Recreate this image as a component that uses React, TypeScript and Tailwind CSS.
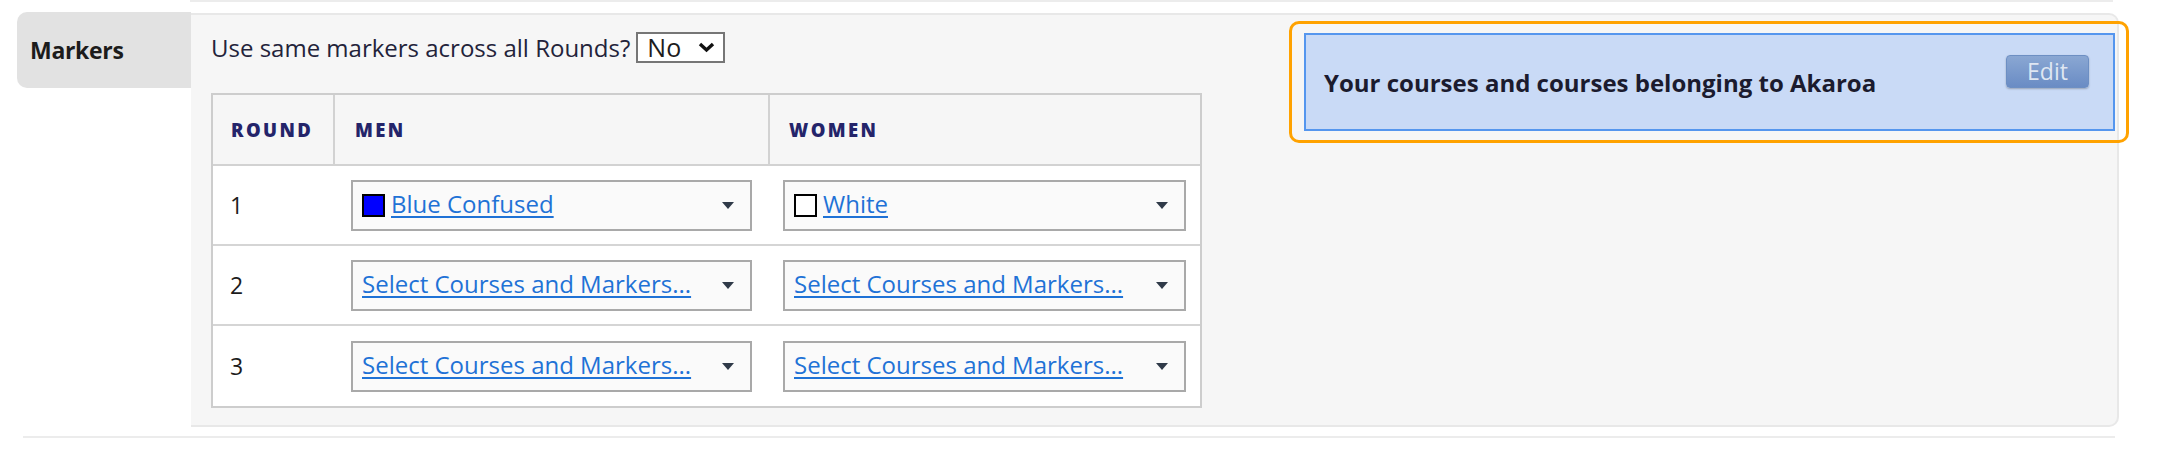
import React from 'react'

type Marker = { label: string; swatch?: string }

const rows: { round: number; men: Marker; women: Marker }[] = [
  { round: 1, men: { label: 'Blue Confused', swatch: 'bg-[#0000ff]' }, women: { label: 'White', swatch: 'bg-white' } },
  { round: 2, men: { label: 'Select Courses and Markers...' }, women: { label: 'Select Courses and Markers...' } },
  { round: 3, men: { label: 'Select Courses and Markers...' }, women: { label: 'Select Courses and Markers...' } },
]

const Caret = () => (
  <svg width="12" height="7" viewBox="0 0 12 7" className="shrink-0">
    <path d="M0 0 H12 L6 7 Z" fill="#2f3a48" />
  </svg>
)

const MarkerSelect: React.FC<{ marker: Marker; width: string }> = ({ marker, width }) => (
  <div className={`${width} h-[51px] border-2 border-[#a9a9a9] bg-[#fafafa] flex items-center justify-between pl-[9px] pr-[16px]`}>
    <div className="flex items-center gap-[6px]">
      {marker.swatch && (
        <span className={`w-[23px] h-[23px] border-2 border-black shrink-0 ${marker.swatch}`} />
      )}
      <a className="text-[24px] text-[#1f72d6] underline underline-offset-[3px] leading-none pb-[3px] whitespace-nowrap">
        {marker.label}
      </a>
    </div>
    <Caret />
  </div>
)

const App: React.FC = () => {
  return (
    <div className="w-[2159px] h-[452px] bg-white text-[#1c1c1c] font-['Open_Sans',sans-serif] overflow-hidden">
      {/* ── line of the section above ── */}
      <div className="ml-[190px] w-[1923px] h-[2px] bg-[#ececec]" />

      <div className="flex ml-[17px] mt-[10px]">
        {/* ── Tab ── */}
        <div className="w-[174px] h-[76px] bg-[#e2e2e2] rounded-l-[10px] flex items-center pl-[13px]">
          <span className="text-[23px] font-bold tracking-[-0.3px]">Markers</span>
        </div>

        {/* ── Panel ── */}
        <div className="mt-[1px] w-[1928px] h-[414px] bg-[#f6f6f6] border-2 border-[#e8e8e8] border-l-0 rounded-r-[10px] flex justify-between">
          <div className="pl-[20px] pt-[17px]">
            <div className="flex items-center h-[31px] gap-[6px]">
              <span className="text-[24px] text-[#23233a] leading-none">Use same markers across all Rounds?</span>
              <div className="w-[89px] h-[31px] border-2 border-[#767676] bg-white flex items-center justify-between pl-[9px] pr-[8px]">
                <span className="text-[25px] leading-none">No</span>
                <svg width="17" height="11" viewBox="0 0 17 11">
                  <path d="M2 2 L8.5 8 L15 2" fill="none" stroke="#111" strokeWidth="3.4" />
                </svg>
              </div>
            </div>

            {/* ── Table ── */}
            <div className="mt-[30px] w-[991px] border-2 border-[#cdcdcd]">
              <div className="grid grid-cols-[122px_435px_430px] h-[71px] border-b-2 border-[#d2d2d2] text-[18.5px] font-black tracking-[0.13em] text-[#24246a]">
                <div className="flex items-center pl-[18px] border-r-2 border-[#d2d2d2]">ROUND</div>
                <div className="flex items-center pl-[20px] border-r-2 border-[#d2d2d2]">MEN</div>
                <div className="flex items-center pl-[19px]">WOMEN</div>
              </div>
              {rows.map((r, i) => (
                <div
                  key={r.round}
                  className={`grid grid-cols-[122px_435px_430px] h-[80px] bg-white ${i < rows.length - 1 ? 'border-b-2 border-[#d5d5d5]' : ''}`}
                >
                  <div className="flex items-center pl-[17px] text-[23px]">{r.round}</div>
                  <div className="flex items-center pl-[16px]">
                    <MarkerSelect marker={r.men} width="w-[401px]" />
                  </div>
                  <div className="flex items-center pl-[13px]">
                    <MarkerSelect marker={r.women} width="w-[403px]" />
                  </div>
                </div>
              ))}
            </div>
          </div>

          {/* ── Course owner box ── */}
          <div className="mt-[6px] mr-[-12px] w-[840px] h-[122px] border-[3px] border-[#ffa200] rounded-[10px] pt-[9px] pl-[12px] pr-[11px]">
            <div className="w-[811px] h-[98px] bg-[#c9daf6] border-2 border-[#5596ee] flex justify-between pl-[18px] pr-[24px]">
              <span className="self-center pt-[2px] text-[24px] font-bold text-[#1b1b2e]">
                Your courses and courses belonging to Akaroa
              </span>
              <button className="mt-[20px] w-[83px] h-[33px] rounded-[4px] bg-gradient-to-b from-[#8aa7d3] to-[#6a8cc4] border border-[#6d8fc3] shadow-[0_1px_2px_rgba(0,0,0,0.25)] text-[23px] text-[#dfe6f2] leading-none flex items-center justify-center">
                Edit
              </button>
            </div>
          </div>
        </div>
      </div>

      {/* ── line of the section below ── */}
      <div className="ml-[23px] mt-[9px] w-[2092px] h-[2px] bg-[#ececec]" />
    </div>
  )
}

export default App
